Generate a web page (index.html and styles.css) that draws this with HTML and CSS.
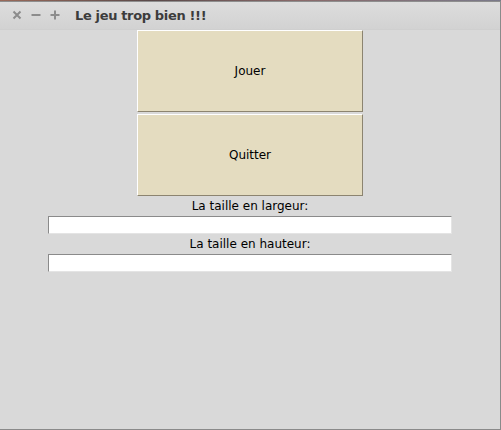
FILE: index.html
```html
<!DOCTYPE html>
<html>
<head>
<meta charset="utf-8">
<link rel="stylesheet" href="styles.css">
</head>
<body>
<div class="desk"></div>
<div class="window">
  <div class="titlebar">
    <div class="controls">
      <svg class="ctl" width="10" height="10" viewBox="0 0 10 10"><path d="M1.5 1.5 L8.5 8.5 M8.5 1.5 L1.5 8.5" stroke="#8c8c8c" stroke-width="2"/></svg>
      <svg class="ctl" width="10" height="10" viewBox="0 0 10 10"><path d="M0.5 5 L9.5 5" stroke="#8c8c8c" stroke-width="2"/></svg>
      <svg class="ctl" width="10" height="10" viewBox="0 0 10 10"><path d="M0.5 5 L9.5 5 M5 0.5 L5 9.5" stroke="#8c8c8c" stroke-width="2"/></svg>
    </div>
    <div class="title">Le jeu trop bien !!!</div>
  </div>
  <div class="content">
    <div class="btn btn-first">Jouer</div>
    <div class="btn">Quitter</div>
    <div class="label">La taille en largeur:</div>
    <div class="entry"></div>
    <div class="label">La taille en hauteur:</div>
    <div class="entry"></div>
  </div>
</div>
</body>
</html>
```
FILE: styles.css
```css
html, body {
  margin: 0;
  padding: 0;
  background: #d9d9d9;
  width: 501px;
  height: 430px;
  overflow: hidden;
}
.desk {
  height: 1px;
  background: linear-gradient(90deg, #9a6a5a, #5a4a4a 30%, #8a6a6a 60%, #7a7a8a);
}
.window {
  height: 429px;
  box-sizing: border-box;
  border-top: 1px solid #8e8e8e;
  border-right: 1px solid #8a8a8a;
  border-bottom: 1px solid #8a8a8a;
  display: flex;
  flex-direction: column;
}
.titlebar {
  height: 28px;
  flex: none;
  background: linear-gradient(#dddddd, #d2d2d2);
  border-bottom: 1px solid #cfcfcf;
  display: flex;
  align-items: center;
  box-sizing: border-box;
  padding-left: 12px;
  padding-bottom: 1px;
  font-family: "DejaVu Sans", sans-serif;
}
.controls {
  display: flex;
  gap: 9px;
  align-items: center;
}
.title {
  margin-left: 15px;
  font-weight: bold;
  font-size: 13px;
  color: #3c3c3c;
  letter-spacing: -0.35px;
}
.content {
  flex: 1;
  background: #d9d9d9;
  display: flex;
  flex-direction: column;
  align-items: center;
  font-family: "DejaVu Sans", sans-serif;
  font-size: 12px;
  color: #000;
}
.btn {
  width: 226px;
  height: 82px;
  box-sizing: border-box;
  background: #e4dcc0;
  border-top: 1px solid #ffffff;
  border-left: 1px solid #ffffff;
  border-right: 1px solid #8c8470;
  border-bottom: 1px solid #8c8470;
  display: flex;
  align-items: center;
  justify-content: center;
}
.btn-first {
  margin-bottom: 2px;
}
.label {
  height: 20px;
  line-height: 20px;
  text-align: center;
}
.entry {
  width: 404px;
  height: 18px;
  box-sizing: border-box;
  background: #ffffff;
  border-top: 1px solid #8a8a8a;
  border-left: 1px solid #8a8a8a;
  border-right: 1px solid #e4e4e4;
  border-bottom: 1px solid #e4e4e4;
}
```
